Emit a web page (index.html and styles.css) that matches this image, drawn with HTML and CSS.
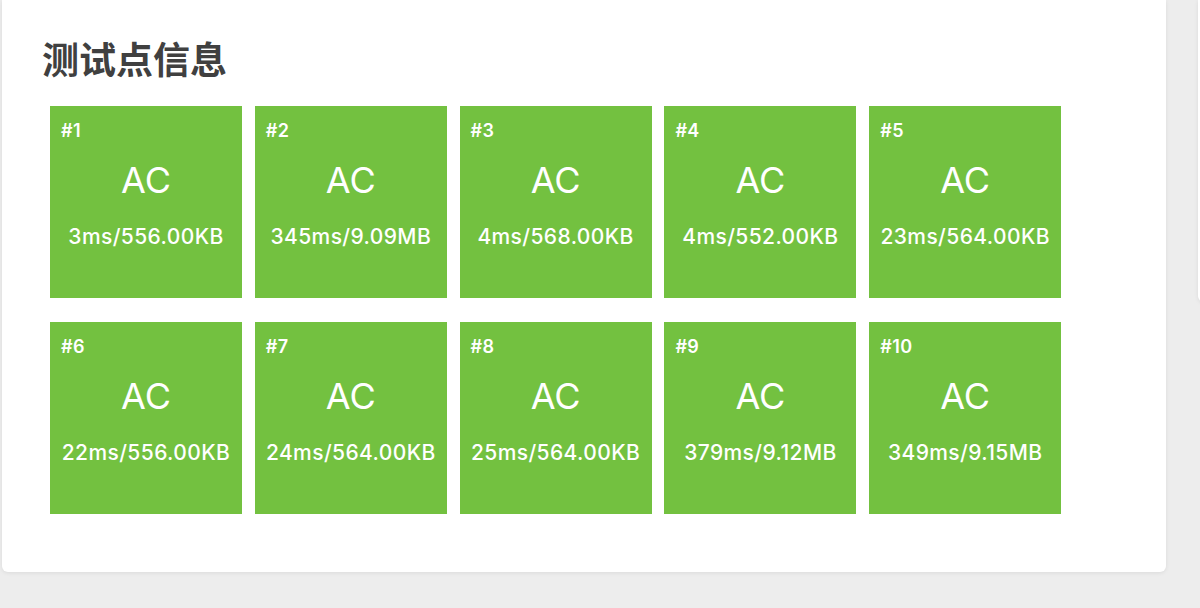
FILE: index.html
```html
<!DOCTYPE html>
<html lang="zh-CN">
<head>
    <meta charset="UTF-8">
    <title>测试点信息</title>
    <link rel="stylesheet" href="styles.css">
</head>
<body>
    <div class="card">
        <h2 class="card-title">测试点信息</h2>
        <div class="case-grid">
            <div class="case"><div class="case-no">#1</div><div class="case-status">AC</div><div class="case-info">3ms/556.00KB</div></div>
            <div class="case"><div class="case-no">#2</div><div class="case-status">AC</div><div class="case-info">345ms/9.09MB</div></div>
            <div class="case"><div class="case-no">#3</div><div class="case-status">AC</div><div class="case-info">4ms/568.00KB</div></div>
            <div class="case"><div class="case-no">#4</div><div class="case-status">AC</div><div class="case-info">4ms/552.00KB</div></div>
            <div class="case"><div class="case-no">#5</div><div class="case-status">AC</div><div class="case-info">23ms/564.00KB</div></div>
            <div class="case"><div class="case-no">#6</div><div class="case-status">AC</div><div class="case-info">22ms/556.00KB</div></div>
            <div class="case"><div class="case-no">#7</div><div class="case-status">AC</div><div class="case-info">24ms/564.00KB</div></div>
            <div class="case"><div class="case-no">#8</div><div class="case-status">AC</div><div class="case-info">25ms/564.00KB</div></div>
            <div class="case"><div class="case-no">#9</div><div class="case-status">AC</div><div class="case-info">379ms/9.12MB</div></div>
            <div class="case"><div class="case-no">#10</div><div class="case-status">AC</div><div class="case-info">349ms/9.15MB</div></div>
        </div>
    </div>
    <div class="side-card"></div>
</body>
</html>
```

FILE: styles.css
```css
body {
    margin: 0;
    height: 608px;
    overflow: hidden;
    background-color: #ededed;
    display: flex;
    align-items: flex-start;
    gap: 32px;
    font-family: Inter, "Liberation Sans", sans-serif;
}
.card {
    flex-shrink: 0;
    width: 1164px;
    margin-left: 2px;
    padding: 40px 40px 58px;
    box-sizing: border-box;
    background-color: #fff;
    border-radius: 0 0 6px 6px;
    box-shadow: 0 1px 4px rgba(0, 0, 0, 0.08);
}
.card-title {
    margin: 0;
    font-family: "Noto Sans CJK SC", sans-serif;
    font-size: 37px;
    line-height: 36px;
    font-weight: bold;
    color: #404040;
}
.case-grid {
    display: grid;
    grid-template-columns: repeat(5, 192px);
    column-gap: 12.8px;
    row-gap: 24px;
    margin-top: 30px;
    padding-left: 8px;
}
.case {
    height: 192px;
    padding-top: 15px;
    box-sizing: border-box;
    background-color: #73c140;
    color: #fff;
    text-align: center;
}
.case-no {
    padding-left: 11px;
    text-align: left;
    font-size: 18px;
    line-height: 20px;
    font-weight: 600;
    letter-spacing: 0.4px;
}
.case-status {
    margin-top: 21px;
    font-size: 36px;
    line-height: 36px;
}
.case-info {
    margin-top: 27px;
    font-size: 21px;
    line-height: 24px;
    font-weight: 500;
    letter-spacing: 0.4px;
}
.side-card {
    flex-shrink: 0;
    width: 300px;
    height: 302px;
    background-color: #fff;
    border-radius: 0 0 6px 6px;
    box-shadow: 0 1px 4px rgba(0, 0, 0, 0.08);
}
```
